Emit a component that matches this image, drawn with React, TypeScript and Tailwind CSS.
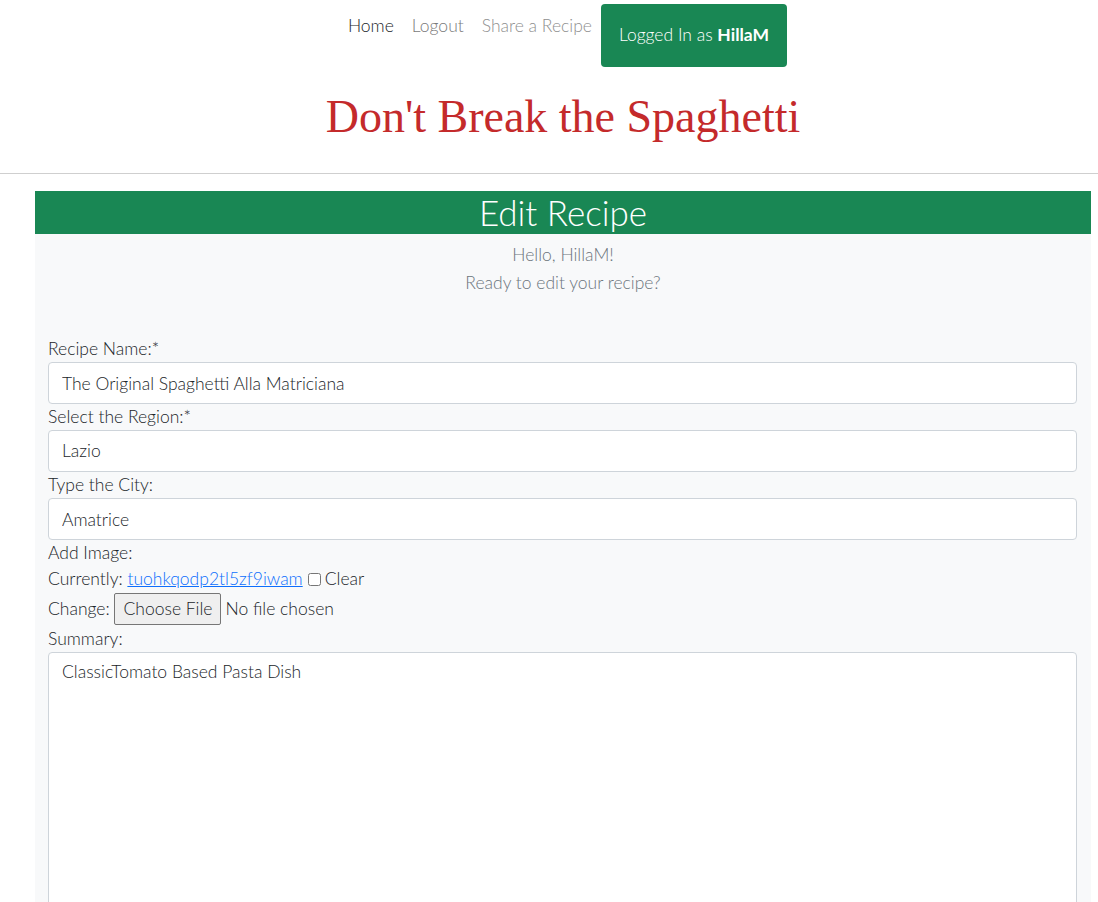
export default function App() {
  return (
    <div className="min-h-[902px] bg-white font-['Lato','Noto_Sans',sans-serif] font-light text-[#212529]">
      <header className="ml-[35px] w-[1056px]">
        <nav className="flex items-start justify-center pt-[4px] text-[17.5px]">
          <a className="px-[9px] pt-[10px] leading-[24px] text-[#212529]">Home</a>
          <a className="px-[9px] pt-[10px] leading-[24px] text-[#7a7a7a]">Logout</a>
          <a className="px-[9px] pt-[10px] leading-[24px] text-[#8f8f8f]">Share a Recipe</a>
          <button className="h-[63px] rounded-[4px] bg-[#198754] px-[18px] font-light text-white">
            Logged In as <span className="font-bold">HillaM</span>
          </button>
        </nav>
        <h1 className="mt-[18px] text-center font-['Liberation_Serif',serif] text-[46px] font-normal leading-[64px] text-[#c42a2b]">
          Don&apos;t Break the Spaghetti
        </h1>
      </header>
      <hr className="mt-[24px] border-t border-[#cfcfcf]" />

      <main className="ml-[35px] mt-[17px] min-h-[711px] w-[1056px] bg-[#f8f9fa]">
        <h2 className="h-[43px] bg-[#198754] text-center text-[35px] font-light leading-[43px] text-white">
          Edit Recipe
        </h2>
        <div className="mt-[7px] text-center text-[17.5px] leading-[28px] text-[#6c757d]">
          <p>Hello, HillaM!</p>
          <p>Ready to edit your recipe?</p>
        </div>

        <form className="mt-[39px] px-[13px] text-[17.5px]">
          <label className="block leading-[26px]">Recipe Name:*</label>
          <input
            className="block h-[42px] w-[1029px] rounded-[4px] border border-[#ced4da] bg-white px-[13px] font-light outline-none"
            defaultValue="The Original Spaghetti Alla Matriciana"
          />
          <label className="block leading-[26px]">Select the Region:*</label>
          <div className="flex h-[42px] w-[1029px] items-center rounded-[4px] border border-[#ced4da] bg-white px-[13px]">
            Lazio
          </div>
          <label className="block leading-[26px]">Type the City:</label>
          <input
            className="block h-[42px] w-[1029px] rounded-[4px] border border-[#ced4da] bg-white px-[13px] font-light outline-none"
            defaultValue="Amatrice"
          />
          <label className="block leading-[26px]">Add Image:</label>
          <div className="flex items-center leading-[26px]">
            <span>Currently:&nbsp;</span>
            <a className="text-[#0d6efd] underline">tuohkqodp2tl5zf9iwam</a>
            <input type="checkbox" className="ml-[5px] mr-[4px] h-[13px] w-[13px]" />
            <span>Clear</span>
          </div>
          <div className="flex h-[34px] items-center">
            <span>Change:&nbsp;</span>
            <span className="flex h-[32px] items-center rounded-[2px] border border-[#767676] bg-[#efefef] px-[8px] font-light">
              Choose File
            </span>
            <span className="ml-[4px] font-light">No file chosen</span>
          </div>
          <label className="block leading-[26px]">Summary:</label>
          <textarea
            className="block h-[300px] w-[1029px] resize-none rounded-[4px] border border-[#ced4da] bg-white px-[13px] py-[6px] font-light leading-[26px] outline-none"
            defaultValue="ClassicTomato Based Pasta Dish"
          />
        </form>
      </main>
    </div>
  );
}
